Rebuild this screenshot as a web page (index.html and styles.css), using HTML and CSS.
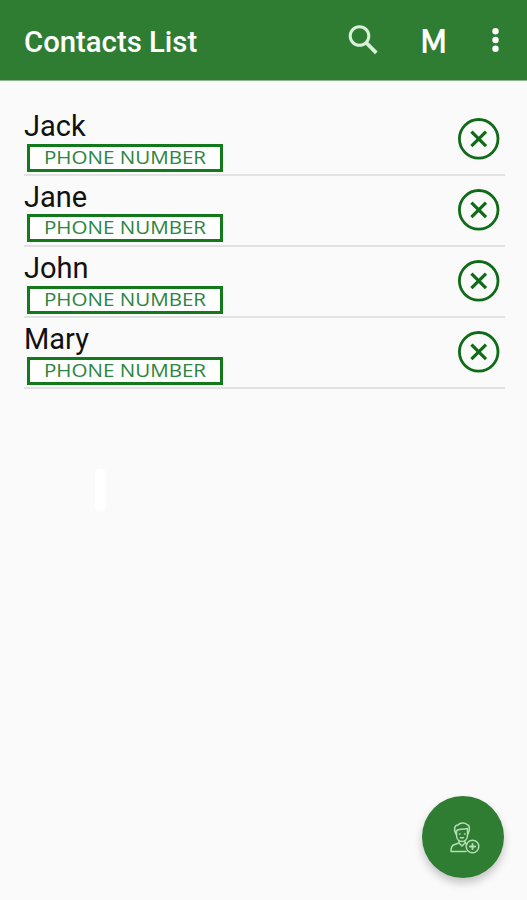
FILE: index.html
```html
<!DOCTYPE html>
<html lang="en">
<head>
    <meta charset="UTF-8">
    <meta name="viewport" content="width=device-width, initial-scale=1.0">
    <title>Contacts List</title>
    <link rel="stylesheet" href="styles.css">
</head>
<body>
    <header class="toolbar">
        <h1>Contacts List</h1>
        <button class="search" aria-label="Search">
            <svg width="32" height="32" viewBox="0 0 32 32" fill="none" stroke="#d9f0da" stroke-width="3">
                <circle cx="12.5" cy="12" r="9.3"/>
                <path d="M19 18.5L29.3 28.8" stroke-width="3.8"/>
            </svg>
        </button>
        <button class="mode">M</button>
        <button class="more" aria-label="More">
            <svg width="8" height="26" viewBox="0 0 8 26" fill="#fff">
                <circle cx="4.5" cy="4.3" r="3.2"/>
                <circle cx="4.5" cy="13" r="3.2"/>
                <circle cx="4.5" cy="21.7" r="3.2"/>
            </svg>
        </button>
    </header>

    <main>
        <ul class="contacts">
            <li class="contact">
                <div class="info">
                    <h2>Jack</h2>
                    <div class="phone"><span>PHONE NUMBER</span></div>
                </div>
                <button class="delete" aria-label="Delete">
                    <svg width="42" height="42" viewBox="0 0 42 42" fill="none" stroke="#106b18">
                        <circle cx="20.7" cy="20.8" r="19.3" stroke-width="2.8"/>
                        <path d="M13.4 13.6L28 28.2M28 13.6L13.4 28.2" stroke-width="3.2"/>
                    </svg>
                </button>
            </li>
            <li class="contact">
                <div class="info raised">
                    <h2>Jane</h2>
                    <div class="phone"><span>PHONE NUMBER</span></div>
                </div>
                <button class="delete" aria-label="Delete">
                    <svg width="42" height="42" viewBox="0 0 42 42" fill="none" stroke="#106b18">
                        <circle cx="20.7" cy="20.8" r="19.3" stroke-width="2.8"/>
                        <path d="M13.4 13.6L28 28.2M28 13.6L13.4 28.2" stroke-width="3.2"/>
                    </svg>
                </button>
            </li>
            <li class="contact">
                <div class="info">
                    <h2>John</h2>
                    <div class="phone"><span>PHONE NUMBER</span></div>
                </div>
                <button class="delete" aria-label="Delete">
                    <svg width="42" height="42" viewBox="0 0 42 42" fill="none" stroke="#106b18">
                        <circle cx="20.7" cy="20.8" r="19.3" stroke-width="2.8"/>
                        <path d="M13.4 13.6L28 28.2M28 13.6L13.4 28.2" stroke-width="3.2"/>
                    </svg>
                </button>
            </li>
            <li class="contact">
                <div class="info">
                    <h2>Mary</h2>
                    <div class="phone"><span>PHONE NUMBER</span></div>
                </div>
                <button class="delete" aria-label="Delete">
                    <svg width="42" height="42" viewBox="0 0 42 42" fill="none" stroke="#106b18">
                        <circle cx="20.7" cy="20.8" r="19.3" stroke-width="2.8"/>
                        <path d="M13.4 13.6L28 28.2M28 13.6L13.4 28.2" stroke-width="3.2"/>
                    </svg>
                </button>
            </li>
        </ul>
        <div class="mark"></div>
    </main>

    <button class="add" aria-label="Add contact">
        <svg width="32" height="34" viewBox="0 0 32 34" fill="none" stroke="#b5deb5" stroke-width="1.5" stroke-linecap="round" stroke-linejoin="round">
            <path d="M7 13C4 8 6 4 9 4C11 1.5 16 1.5 18 3.5C21 4 21 9 19 13"/>
            <path d="M7.5 10C9 7 12 9 18.5 7.5"/>
            <path d="M7.5 10V14C7.5 18 10 20.5 13 20.5S18.5 18 18.5 14V8"/>
            <path d="M10.5 13H11M15.5 13H16M11.5 16.8H14.5"/>
            <path d="M10 19.5V22L4.5 24Q2 25.5 2 30.5H17M16 19.5V22L18 23M10 22L13 25L16 22"/>
            <circle cx="23.5" cy="25.5" r="6.3"/>
            <path d="M23.5 22.8V28.2M20.8 25.5H26.2" stroke-width="1.8"/>
        </svg>
    </button>
</body>
</html>
```
FILE: styles.css
```css
* {
    box-sizing: border-box;
}

body {
    background-color: #fafafa;
    color: #111;
    margin: 0;
    min-height: 900px;
    font-family: Roboto, sans-serif;
}

button {
    background: none;
    border: 0;
    padding: 0;
    color: #fff;
    font-family: inherit;
    cursor: pointer;
}

svg {
    display: block;
}

.toolbar {
    display: flex;
    align-items: center;
    height: 81px;
    padding: 0 28px 0 24px;
    background-color: #2f7d32;
    border-bottom: 1px solid #8fb391;
    color: #fff;
}

h1 {
    flex: 1;
    margin: 3px 0 0;
    font-size: 29.3px;
    font-weight: 500;
}

.mode {
    margin: 0 42px 1px 39px;
    font-family: Lato, sans-serif;
    font-size: 33px;
    font-weight: 900;
    transform: scaleX(.82);
}

.contacts {
    list-style: none;
    margin: 0;
    padding: 24px 22px 0 24px;
}

.contact {
    display: flex;
    justify-content: space-between;
    height: 71px;
    border-bottom: 2px solid #e2e2e2;
}

h2 {
    margin: 0;
    height: 39px;
    font-size: 29px;
    font-weight: 400;
    line-height: 42px;
}

.raised h2 {
    height: 38px;
}

.phone {
    display: flex;
    align-items: center;
    justify-content: center;
    width: 196px;
    height: 28px;
    margin-left: 3px;
    padding-bottom: 2px;
    border: 3px solid #137a1b;
    background-color: #fff;
    color: #2c8540;
    font-family: "Open Sans", sans-serif;
    font-size: 17.5px;
    white-space: nowrap;
}

/* wide letters inside the phone box */
.phone span {
    transform: scaleX(1.175);
}

.delete {
    align-self: flex-start;
    margin: 13px 5px 0 0;
}

.mark {
    width: 11px;
    height: 42px;
    margin: 80px 0 0 95px;
    border-radius: 5px;
    background-color: #fff;
}

.add {
    position: fixed;
    right: 23px;
    bottom: 22px;
    display: flex;
    align-items: center;
    justify-content: center;
    width: 82px;
    height: 82px;
    padding: 2px 0 0 4px;
    border-radius: 50%;
    background-color: #2f7d32;
    box-shadow: 0 5px 9px rgba(0, 0, 0, .22);
}
```
